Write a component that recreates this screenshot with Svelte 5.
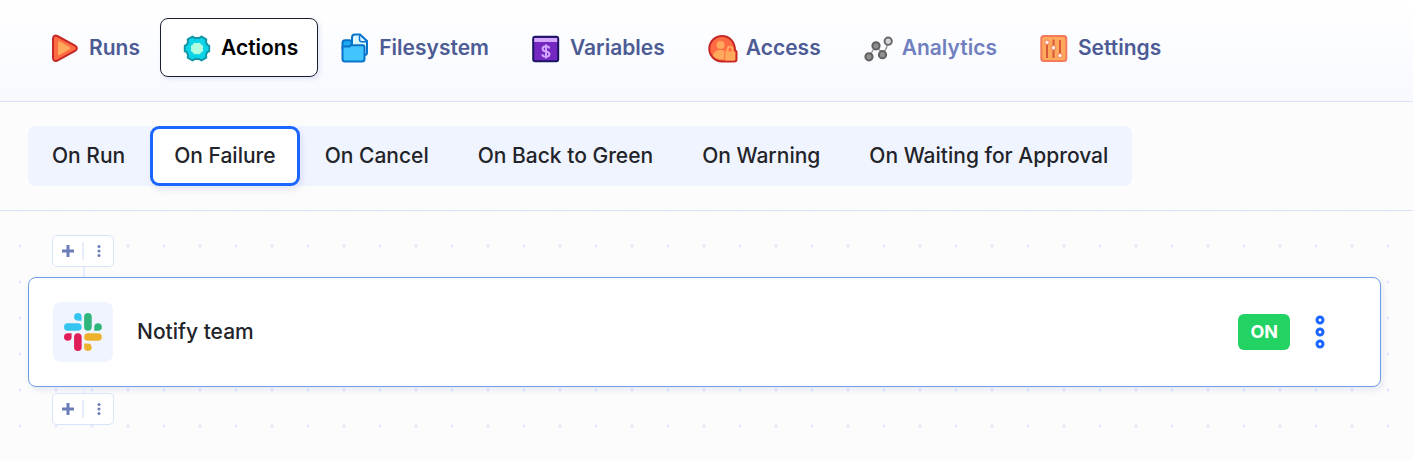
<script>
  const tabs = ['Runs', 'Actions', 'Filesystem', 'Variables', 'Access', 'Analytics', 'Settings'];
  const triggers = [
    'On Run',
    'On Failure',
    'On Cancel',
    'On Back to Green',
    'On Warning',
    'On Waiting for Approval'
  ];

  let activeTab = $state('Actions');
  let activeTrigger = $state('On Failure');
  let enabled = $state(true);
</script>

{#snippet tabIcon(name)}
  <svg class="tab-icon" viewBox="0 0 28 28" aria-hidden="true">
    {#if name === 'Runs'}
      <path d="M2 4.5C2 1.8 4 .9 6.3 2L24 11.7c2.5 1.4 2.5 3.8 0 5.2L6.3 26.6C4 27.8 2 26.7 2 24z" fill="#ff6b43" stroke="#c62828" stroke-width="2" />
      <path d="M7 8.2v11.9c0 1 .7 1.3 1.5.9L18.8 15c.8-.5.8-1.2 0-1.7L8.500 7.300C7.700 6.900 7 7.200 7 8.200z" fill="#ffa95c" />
    {:else if name === 'Actions'}
      <path d="M26.200 11.700v5.600l-2 .9-1.200 2.500.3 2.900-4.800 2.900-2.600-1.600h-3.800l-2.600 1.600-4.800-2.900.3-2.900-1.200-2.500-2-.9v-5.600l2-.9 1.200-2.500-.3-2.900 4.800-2.900 2.600 1.600h3.800l2.600-1.600 4.800 2.900-.3 2.900 1.200 2.500z" fill="#0bd4e8" stroke="#1496a8" stroke-width="2" stroke-linejoin="round" />
      <path d="M11.500 9l2.500.7 2.500-.7 1.500 2 1.700 1-.3 2.500.3 2.500-1.700 1-1.500 2-2.500-.7-2.500.7-1.500-2-1.700-1 .3-2.500-.3-2.500 1.700-1z" fill="#b2ffe0" stroke="#b2ffe0" stroke-linejoin="round" />
    {:else if name === 'Filesystem'}
      <path d="M11 10V3.500C11 1.500 12 .5 14 .5h5l7 6.500v11.500c0 1.500-1 2.500-2.500 2.500H22" fill="#d9f8ff" stroke="#0872cb" stroke-width="2" />
      <path d="M18.500 1.500v4c0 1.500.8 2.300 2.300 2.300h4.700" fill="none" stroke="#0872cb" stroke-width="1.500" />
      <path d="M1.500 14V9c0-2 .8-2.800 2.500-2.800h4.500c1.200 0 1.800.8 2.200 1.800v6z" fill="#20aaf0" stroke="#0872cb" stroke-width="2" />
      <path d="M2.300 12.500h6.200l1.500-1.200h11.500c1.500 0 2 .7 2 2V25c0 1.800-.8 2.500-2.500 2.500H4c-1.800 0-2.500-.7-2.500-2.500V13.500c0-.6.300-1 .8-1z" fill="#42c5ff" stroke="#0872cb" stroke-width="2" />
    {:else if name === 'Variables'}
      <rect x="1.200" y="2.800" width="25" height="24.500" rx="2" fill="#7427c1" stroke="#1b1464" stroke-width="2" />
      <path d="M2.200 4h23v4h-23z" fill="#d5a6ff" />
      <path d="M17.200 14.500c0-1.500-1.400-2.200-3.200-2.200-2 0-3.400.9-3.400 2.600 0 3.600 6.900 1.700 6.900 5.200 0 1.700-1.500 2.600-3.500 2.600s-3.600-.9-3.600-2.500M14 10.500v14" fill="none" stroke="#d5a6ff" stroke-width="2" />
    {:else if name === 'Access'}
      <path d="M14 2a12.500 12.500 0 1 0 0 25.500h12c1.600 0 2.500-.8 2.500-2V18c0-.8-.6-1.300-1.400-1.400C27 8 21.800 2 14 2z" fill="#ff6b43" stroke="#c62828" stroke-width="2" />
      <circle cx="12.500" cy="11" r="4" fill="#ffa95c" />
      <path d="M5 21.500c.7-3.600 3.600-5.500 8-5.500 2.500 0 4 .6 5 2v7.500h-5c-3.500 0-6-1.200-8-4z" fill="#ffa95c" />
      <path d="M19.500 18.500V16c0-4.300 5-4.300 5 0v2.500" fill="none" stroke="#ffa95c" stroke-width="2" />
      <path d="M17 17.500h10.200v8c0 .7-.4 1-1 1H17z" fill="#ffa95c" />
      <path d="M16.800 17v9" stroke="#ff6b43" stroke-width="1" />
    {:else if name === 'Analytics'}
      <path d="M5.500 22.500l6-11 8 9 5.500-13" fill="none" stroke="#9b9b9b" stroke-width="1.500" />
      <circle cx="5" cy="22.800" r="3.600" fill="#8f8f8f" stroke="#606060" stroke-width="2" />
      <circle cx="12" cy="11.800" r="3.600" fill="#8f8f8f" stroke="#606060" stroke-width="2" />
      <circle cx="18.500" cy="20.700" r="3.600" fill="#8f8f8f" stroke="#606060" stroke-width="2" />
      <circle cx="24.200" cy="7.200" r="3.600" fill="#d4d4d4" stroke="#686868" stroke-width="2" />
    {:else}
      <rect x="1.300" y="2" width="25" height="25" rx="2.500" fill="#ffa95c" stroke="#f47a5c" stroke-width="2" />
      <path d="M7 6v18M13.500 5.500v18.500M20 6v17.500" stroke="#d9583a" stroke-width="2" />
      <g fill="#fff0dc" stroke="#f47a5c">
        <circle cx="7" cy="8.300" r="2.300" />
        <circle cx="13.500" cy="13.800" r="2.300" />
        <circle cx="20" cy="21.700" r="2.300" />
      </g>
    {/if}
  </svg>
{/snippet}

{#snippet insertControls()}
  <div class="insert">
    <button class="insert-button" aria-label="Add action">
      <svg width="12" height="12" viewBox="0 0 12 12" aria-hidden="true">
        <path d="M6 0v12M0 6h12" stroke="#6b7cb8" stroke-width="3" />
      </svg>
    </button>
    <span class="insert-divider"></span>
    <button class="insert-button" aria-label="More options">
      <svg width="4" height="12" viewBox="0 0 4 12" fill="#6b7cb8" aria-hidden="true">
        <circle cx="2" cy="1.500" r="1.500" />
        <circle cx="2" cy="6" r="1.500" />
        <circle cx="2" cy="10.500" r="1.500" />
      </svg>
    </button>
  </div>
{/snippet}

<div class="page">
  <header>
    <nav class="tabs" aria-label="Pipeline">
      {#each tabs as tab}
        <button
          class="tab"
          class:active={activeTab === tab}
          class:muted={tab === 'Analytics'}
          onclick={() => (activeTab = tab)}
        >
          {@render tabIcon(tab)}
          <span>{tab}</span>
        </button>
      {/each}
    </nav>
  </header>

  <section class="trigger-bar">
    <div class="triggers">
      {#each triggers as trigger}
        <button
          class="trigger"
          class:active={activeTrigger === trigger}
          onclick={() => (activeTrigger = trigger)}
        >
          {trigger}
        </button>
      {/each}
    </div>
  </section>

  <main>
    {@render insertControls()}
    <div class="connector"></div>

    <article class="card">
      <div class="logo">
        <svg width="38" height="38" viewBox="0 0 54 54" aria-hidden="true">
          <path d="M19.700.1a5.400 5.400 0 0 0 0 10.800h5.400V5.500A5.400 5.400 0 0 0 19.700.1m0 14.400H5.400a5.400 5.400 0 0 0 0 10.800h14.300a5.400 5.400 0 0 0 0-10.800" fill="#36c5f0" />
          <path d="M53.800 19.900a5.400 5.400 0 0 0-10.800 0v5.400h5.400a5.400 5.400 0 0 0 5.400-5.400m-14.400 0V5.500a5.400 5.400 0 0 0-10.800 0v14.400a5.400 5.400 0 0 0 10.800 0" fill="#2eb67d" />
          <path d="M34 54a5.400 5.400 0 0 0 0-10.800h-5.400v5.400A5.400 5.400 0 0 0 34 54m0-14.400h14.400a5.400 5.400 0 0 0 0-10.800H34a5.400 5.400 0 0 0 0 10.800" fill="#ecb22e" />
          <path d="M0 34.200a5.400 5.400 0 0 0 10.800 0v-5.400H5.400A5.400 5.400 0 0 0 0 34.200m14.300 0v14.400a5.400 5.400 0 0 0 10.800 0V34.200a5.400 5.400 0 0 0-10.800 0" fill="#e01e5a" />
        </svg>
      </div>
      <h2>Notify team</h2>
      <button class="toggle" class:off={!enabled} onclick={() => (enabled = !enabled)}>
        {enabled ? 'ON' : 'OFF'}
      </button>
      <button class="menu" aria-label="Action menu">
        <svg width="10" height="34" viewBox="0 0 10 34" fill="none" stroke="#1a66ff" stroke-width="3" aria-hidden="true">
          <circle cx="5" cy="5" r="3" />
          <circle cx="5" cy="17" r="3" />
          <circle cx="5" cy="29" r="3" />
        </svg>
      </button>
    </article>

    <div class="connector short"></div>
    {@render insertControls()}
  </main>
</div>

<style>
  :global(body) {
    margin: 0;
    background: #fcfcfc;
  }

  .page {
    font-family: Inter, 'Liberation Sans', sans-serif;
    font-size: 21px;
    font-weight: 500;
    line-height: 28px;
    color: #222429;
  }

  button {
    border: none;
    background: none;
    padding: 0;
    font: inherit;
    color: inherit;
    cursor: pointer;
  }

  header {
    padding: 18px 28px 24px;
    background: linear-gradient(#ffffff, #f7f9ff);
    border-bottom: 1px solid #d6e2f5;
  }

  .tabs {
    display: flex;
  }

  .tab {
    display: flex;
    align-items: center;
    gap: 10px;
    box-sizing: border-box;
    height: 59px;
    padding: 0 19px 0 22px;
    border: 1px solid transparent;
    border-radius: 8px;
    color: #4d5b94;
    font-weight: 600;
  }

  .tab.muted {
    color: #7080be;
  }

  .tab.active {
    background: #ffffff;
    border-color: #1b1f33;
    color: #000000;
    box-shadow: 2px 2px 4px rgba(76, 90, 170, 0.14);
  }

  .tab-icon {
    width: 28px;
    height: 28px;
    flex: none;
    overflow: visible;
  }

  .trigger-bar {
    display: flex;
    padding: 24px 28px;
    border-bottom: 1px solid #d6e2f5;
  }

  .triggers {
    display: flex;
    gap: 1px;
    background: #f0f4ff;
    border-radius: 8px;
  }

  .trigger {
    box-sizing: border-box;
    height: 60px;
    padding: 0 21px;
    border: 3px solid transparent;
    border-radius: 9px;
    white-space: nowrap;
  }

  .trigger.active {
    background: #ffffff;
    border-color: #1a66ff;
    box-shadow: 2px 4px 6px rgba(76, 90, 170, 0.12);
  }

  main {
    padding: 24px 32px 36px 28px;
    background-image: radial-gradient(circle, #e3eafb 1px, transparent 2px);
    background-size: 36px 36px;
    background-position: 2px 17px;
  }

  .insert {
    display: flex;
    align-items: center;
    box-sizing: border-box;
    width: 62px;
    height: 32px;
    margin-left: 24px;
    background: #ffffff;
    border: 1px solid #d9e4fa;
    border-radius: 5px;
  }

  .insert-button {
    display: flex;
    flex: 1;
    align-items: center;
    justify-content: center;
    height: 100%;
  }

  .insert-divider {
    width: 2px;
    height: 18px;
    background: #e6edfb;
  }

  .connector {
    width: 2px;
    height: 10px;
    margin-left: 55px;
    background: #e6edfb;
  }

  .connector.short {
    height: 6px;
  }

  .card {
    display: flex;
    align-items: center;
    box-sizing: border-box;
    min-height: 110px;
    padding: 24px 50px 24px 24px;
    background: #ffffff;
    border: 1px solid #6f9fe5;
    border-radius: 8px;
    box-shadow: 2px 3px 6px rgba(76, 90, 170, 0.12);
  }

  .logo {
    display: flex;
    align-items: center;
    justify-content: center;
    width: 60px;
    height: 60px;
    border-radius: 8px;
    background: #f0f4ff;
  }

  h2 {
    flex: 1;
    margin: 0 24px;
    font-size: 21px;
    font-weight: 500;
  }

  .toggle {
    height: 36px;
    padding: 0 12px;
    border-radius: 6px;
    background: #22d262;
    color: #ffffff;
    font-size: 18px;
    font-weight: 700;
  }

  .toggle.off {
    background: #9aa3b8;
  }

  .menu {
    display: flex;
    margin-left: 20px;
    padding: 0 5px;
  }
</style>
